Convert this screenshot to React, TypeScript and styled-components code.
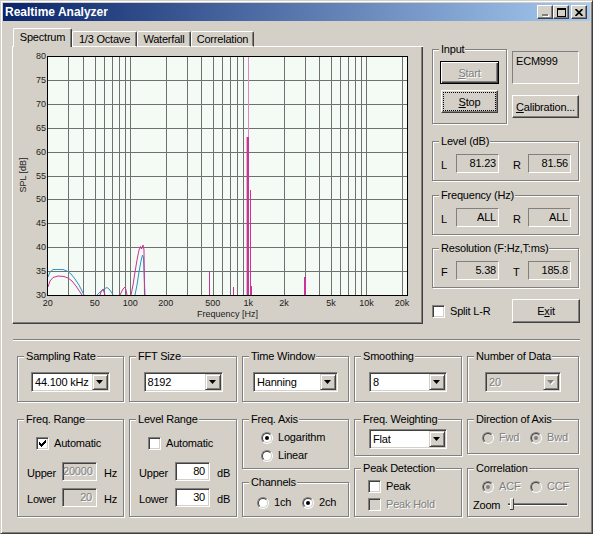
import React from "react";
import styled, { createGlobalStyle } from "styled-components";

const FACE = "#d4d0c8";
const SHADOW = "#808080";
const DARK = "#404040";

const GlobalStyle = createGlobalStyle`
  html, body {
    margin: 0;
    padding: 0;
    background: ${FACE};
  }
  body {
    font-family: "Liberation Sans", Arial, sans-serif;
    font-size: 11px;
    letter-spacing: -0.2px;
    color: #000;
  }
  * {
    box-sizing: border-box;
  }
`;

const Window = styled.div`
  width: 593px;
  height: 534px;
  display: flex;
  flex-direction: column;
  padding: 2px;
  border: 1px solid;
  border-color: ${FACE} ${DARK} ${DARK} ${FACE};
  box-shadow: inset 1px 1px #fff, inset -1px -1px ${SHADOW};
  background: ${FACE};
`;

const TitleBar = styled.div`
  height: 18px;
  flex: none;
  display: flex;
  align-items: center;
  padding: 0 3px 0 2px;
  background: linear-gradient(to right, #0a246a, #a6caf0);
`;

const TitleText = styled.span`
  flex: 1;
  color: #fff;
  font-weight: bold;
  font-size: 12px;
  letter-spacing: 0;
`;

const CaptionButton = styled.span<{ $gap?: number }>`
  width: 16px;
  height: 14px;
  margin-left: ${(p) => p.$gap ?? 0}px;
  display: flex;
  align-items: center;
  justify-content: center;
  background: ${FACE};
  border: 1px solid;
  border-color: #fff ${DARK} ${DARK} #fff;
  box-shadow: inset -1px -1px ${SHADOW};
`;

const Body = styled.div`
  flex: 1;
  display: flex;
  flex-direction: column;
  padding: 7px 0 0 9px;
`;

const TopRow = styled.div`
  display: flex;
  align-items: flex-start;
  gap: 9px;
`;

const TabArea = styled.div`
  width: 411px;
  display: flex;
  flex-direction: column;
`;

const TabStrip = styled.div`
  height: 19px;
  display: flex;
  align-items: flex-end;
`;

const TabLine = styled.div<{ $w?: number; $grow?: boolean }>`
  height: 1px;
  width: ${(p) => (p.$w ? `${p.$w}px` : "auto")};
  flex: ${(p) => (p.$grow ? 1 : "none")};
  background: #fff;
`;

const Tab = styled.div<{ $active?: boolean; $w: number }>`
  width: ${(p) => p.$w}px;
  height: ${(p) => (p.$active ? 19 : 16)}px;
  flex: none;
  display: flex;
  align-items: center;
  justify-content: center;
  padding-bottom: ${(p) => (p.$active ? 2 : 0)}px;
  border-top: 1px solid #fff;
  border-left: 1px solid #fff;
  border-right: 1px solid ${DARK};
  border-bottom: ${(p) => (p.$active ? "none" : "1px solid #fff")};
  border-radius: 2px 2px 0 0;
  box-shadow: inset -1px 0 ${SHADOW};
  white-space: nowrap;
`;

const TabPanel = styled.div`
  height: 277px;
  border-left: 1px solid #fff;
  border-right: 1px solid ${DARK};
  border-bottom: 1px solid ${DARK};
  box-shadow: inset -1px -1px ${SHADOW};
`;

const ChartSvg = styled.svg`
  display: block;
  font-family: "Liberation Sans", Arial, sans-serif;
  font-size: 9px;
  letter-spacing: 0;
`;

const RightColumn = styled.div`
  width: 148px;
  padding-top: 15px;
  display: flex;
  flex-direction: column;
`;

const InputRow = styled.div`
  display: flex;
  gap: 5px;
`;

const SideStack = styled.div`
  display: flex;
  flex-direction: column;
  padding-top: 8px;
  gap: 11px;
`;

const Group = styled.fieldset<{ $w?: number; $h: number; $mt?: number }>`
  margin: ${(p) => p.$mt ?? 0}px 0 0 0;
  padding: 0;
  min-width: 0;
  width: ${(p) => (p.$w ? `${p.$w}px` : "auto")};
  height: ${(p) => p.$h}px;
  border: 1px solid ${SHADOW};
  box-shadow: inset 1px 1px #fff, 1px 1px #fff;
`;

const Legend = styled.legend`
  margin-left: 6px;
  padding: 0 1px 0 2px;
  line-height: 13px;
  background: ${FACE};
  white-space: nowrap;
`;

const GroupBody = styled.div<{ $pt: number; $pl?: number; $gap?: number; $center?: boolean }>`
  display: flex;
  flex-direction: column;
  align-items: ${(p) => (p.$center ? "center" : "flex-start")};
  padding: ${(p) => p.$pt}px 0 0 ${(p) => p.$pl ?? 0}px;
  gap: ${(p) => p.$gap ?? 0}px;
`;

const ButtonBox = styled.div<{ $w: number; $h: number; $default?: boolean; $disabled?: boolean; $ml?: number }>`
  width: ${(p) => p.$w}px;
  height: ${(p) => p.$h}px;
  margin-left: ${(p) => p.$ml ?? 0}px;
  flex: none;
  display: flex;
  padding: 1px;
  background: ${FACE};
  border: 1px solid;
  border-color: ${(p) => (p.$default ? "#000" : `#fff ${DARK} ${DARK} #fff`)};
  box-shadow: ${(p) =>
    p.$default
      ? `inset 1px 1px #fff, inset -1px -1px ${DARK}, inset -2px -2px ${SHADOW}`
      : `inset -1px -1px ${SHADOW}`};
  color: ${(p) => (p.$disabled ? SHADOW : "#000")};
  text-shadow: ${(p) => (p.$disabled ? "1px 1px 0 #fff" : "none")};
`;

const ButtonFace = styled.span<{ $focus?: boolean }>`
  flex: 1;
  display: flex;
  align-items: center;
  justify-content: center;
  border: 1px dotted ${(p) => (p.$focus ? "#000" : "transparent")};
  white-space: nowrap;
`;

type PushButtonProps = {
  w: number;
  h: number;
  isDefault?: boolean;
  disabled?: boolean;
  focus?: boolean;
  ml?: number;
  children: React.ReactNode;
};

const PushButton = ({ w, h, isDefault, disabled, focus, ml, children }: PushButtonProps) => (
  <ButtonBox $w={w} $h={h} $default={isDefault} $disabled={disabled} $ml={ml}>
    <ButtonFace $focus={focus}>{children}</ButtonFace>
  </ButtonBox>
);

const StaticBox = styled.div`
  width: 67px;
  height: 33px;
  padding: 3px 0 0 3px;
  line-height: 13px;
  border: 1px solid;
  border-color: ${SHADOW} #fff #fff ${SHADOW};
`;

const ValueRow = styled.div`
  display: flex;
  align-items: center;
  height: 19px;
`;

const ChanLabel = styled.span<{ $ml?: number }>`
  width: 15px;
  margin-left: ${(p) => p.$ml ?? 0}px;
  padding-top: 3px;
`;

const ValueBox = styled.div`
  width: 43px;
  height: 19px;
  padding-right: 2px;
  line-height: 17px;
  text-align: right;
  border: 1px solid;
  border-color: ${SHADOW} #fff #fff ${SHADOW};
`;

const BottomActions = styled.div`
  margin-top: 11px;
  display: flex;
  align-items: center;
  justify-content: space-between;
`;

const Separator = styled.div`
  margin: 15px 0 0 1px;
  width: 567px;
  height: 2px;
  border-top: 1px solid ${SHADOW};
  border-bottom: 1px solid #fff;
`;

const BottomGrid = styled.div`
  margin: 9px 0 0 5px;
  display: grid;
  grid-template-columns: 107px 108px 107px 108px 112px;
  grid-template-rows: 52px auto;
  column-gap: 5px;
  row-gap: 11px;
`;

const Stack = styled.div`
  display: flex;
  flex-direction: column;
`;

const ComboBox = styled.div<{ $w: number; $disabled?: boolean }>`
  width: ${(p) => p.$w}px;
  height: 20px;
  display: flex;
  padding: 1px;
  border: 1px solid;
  border-color: ${SHADOW} #fff #fff ${SHADOW};
  box-shadow: inset 1px 1px ${DARK}, inset -1px -1px ${FACE};
  background: ${(p) => (p.$disabled ? FACE : "#fff")};
`;

const ComboText = styled.span<{ $disabled?: boolean }>`
  flex: 1;
  padding: 1px 0 0 2px;
  line-height: 15px;
  color: ${(p) => (p.$disabled ? SHADOW : "#000")};
  text-shadow: ${(p) => (p.$disabled ? "1px 1px 0 #fff" : "none")};
`;

const DropButton = styled.span`
  width: 16px;
  height: 16px;
  flex: none;
  display: flex;
  align-items: center;
  justify-content: center;
  padding-top: 1px;
  background: ${FACE};
  border: 1px solid;
  border-color: ${FACE} ${DARK} ${DARK} ${FACE};
  box-shadow: inset 1px 1px #fff, inset -1px -1px ${SHADOW};
`;

const TextField = styled.div<{ $disabled?: boolean }>`
  width: 35px;
  height: 19px;
  padding-right: 4px;
  line-height: 17px;
  text-align: right;
  border: 1px solid;
  border-color: ${SHADOW} #fff #fff ${SHADOW};
  box-shadow: inset 1px 1px ${DARK}, inset -1px -1px ${FACE};
  background: ${(p) => (p.$disabled ? FACE : "#fff")};
  color: ${(p) => (p.$disabled ? SHADOW : "#000")};
  text-shadow: ${(p) => (p.$disabled ? "1px 1px 0 #fff" : "none")};
`;

const FieldRow = styled.div<{ $mt?: number }>`
  display: flex;
  align-items: center;
  height: 19px;
  margin: ${(p) => p.$mt ?? 0}px 0 0 9px;
`;

const FieldLabel = styled.span<{ $w: number }>`
  width: ${(p) => p.$w}px;
  padding-top: 2px;
`;

const Unit = styled.span`
  margin-left: 7px;
  padding-top: 2px;
`;

const OptionRow = styled.div<{ $ml?: number; $mt?: number }>`
  display: flex;
  align-items: center;
  height: 13px;
  margin: ${(p) => p.$mt ?? 0}px 0 0 ${(p) => p.$ml ?? 0}px;
`;

const OptionItem = styled.label<{ $w?: number; $disabled?: boolean }>`
  display: flex;
  align-items: center;
  gap: 5px;
  width: ${(p) => (p.$w ? `${p.$w}px` : "auto")};
  line-height: 13px;
  white-space: nowrap;
  color: ${(p) => (p.$disabled ? SHADOW : "#000")};
  text-shadow: ${(p) => (p.$disabled ? "1px 1px 0 #fff" : "none")};
`;

const CheckBox = styled.span<{ $disabled?: boolean }>`
  width: 13px;
  height: 13px;
  flex: none;
  display: flex;
  align-items: center;
  justify-content: center;
  border: 1px solid;
  border-color: ${SHADOW} #fff #fff ${SHADOW};
  box-shadow: inset 1px 1px ${DARK}, inset -1px -1px ${FACE};
  background: ${(p) => (p.$disabled ? FACE : "#fff")};
`;

const RadioOuter = styled.span`
  width: 12px;
  height: 12px;
  flex: none;
  border-radius: 50%;
  border: 1px solid;
  border-color: ${SHADOW} #fff #fff ${SHADOW};
  display: flex;
`;

const RadioInner = styled.span<{ $disabled?: boolean }>`
  flex: 1;
  border-radius: 50%;
  border: 1px solid;
  border-color: ${DARK} ${FACE} ${FACE} ${DARK};
  background: ${(p) => (p.$disabled ? FACE : "#fff")};
  display: flex;
  align-items: center;
  justify-content: center;
`;

const RadioDot = styled.span<{ $disabled?: boolean }>`
  width: 4px;
  height: 4px;
  border-radius: 50%;
  background: ${(p) => (p.$disabled ? SHADOW : "#000")};
`;

const ZoomLabel = styled.span`
  width: 35px;
`;

/* ---------- small drawn pieces ---------- */

const Arrow = ({ disabled }: { disabled?: boolean }) => (
  <svg width={8} height={5} viewBox="0 0 8 5">
    {disabled && <polygon points="1,1 8,1 4.5,5" fill="#fff" />}
    <polygon points="0,0 7,0 3.5,4" fill={disabled ? SHADOW : "#000"} />
  </svg>
);

const CheckMark = () => (
  <svg width={7} height={7} viewBox="0 0 7 7" shapeRendering="crispEdges">
    <polygon points="0,2 2,4 7,-1 7,2 2,7 0,5" fill="#000" />
  </svg>
);

const Check = ({ checked, disabled }: { checked?: boolean; disabled?: boolean }) => (
  <CheckBox $disabled={disabled}>{checked && <CheckMark />}</CheckBox>
);

const Radio = ({ checked, disabled }: { checked?: boolean; disabled?: boolean }) => (
  <RadioOuter>
    <RadioInner $disabled={disabled}>{checked && <RadioDot $disabled={disabled} />}</RadioInner>
  </RadioOuter>
);

const Combo = ({ w, value, disabled }: { w: number; value: string; disabled?: boolean }) => (
  <ComboBox $w={w} $disabled={disabled}>
    <ComboText $disabled={disabled}>{value}</ComboText>
    <DropButton>
      <Arrow disabled={disabled} />
    </DropButton>
  </ComboBox>
);

const Trackbar = () => (
  <svg width={60} height={14} viewBox="0 0 60 14">
    <line x1={0} x2={59} y1={5.5} y2={5.5} stroke={SHADOW} />
    <line x1={0} x2={59} y1={6.5} y2={6.5} stroke={DARK} />
    <line x1={0} x2={60} y1={7.5} y2={7.5} stroke="#fff" />
    <rect x={2} y={0} width={4} height={12} fill={FACE} />
    <path d="M2.5 11.5 V0.5 H5.5" stroke="#fff" fill="none" />
    <path d="M5.5 0.5 V11.5 H2" stroke={DARK} fill="none" />
  </svg>
);

const MinGlyph = () => (
  <svg width={8} height={8} viewBox="0 0 8 8" style={{ marginTop: 2 }}>
    <rect x={2} y={6} width={6} height={2} fill="#fff" />
    <rect x={1} y={5} width={6} height={2} fill={SHADOW} />
  </svg>
);

const MaxGlyph = () => (
  <svg width={9} height={9} viewBox="0 0 9 9">
    <rect x={0.5} y={0.5} width={8} height={8} fill="none" stroke="#000" />
    <line x1={0} x2={9} y1={1.5} y2={1.5} stroke="#000" />
  </svg>
);

const CloseGlyph = () => (
  <svg width={8} height={7} viewBox="0 0 8 7">
    <path d="M0.5 0 L7.5 7 M7.5 0 L0.5 7" stroke="#000" strokeWidth={1.7} />
  </svg>
);

/* ---------- spectrum chart ---------- */

const GRID_FREQS = [
  30, 40, 50, 60, 70, 80, 90, 100, 200, 300, 400, 500, 600, 700, 800, 900, 1000, 2000, 3000,
  4000, 5000, 6000, 7000, 8000, 9000, 10000, 20000,
];

const X_LABELS: [number, string][] = [
  [20, "20"],
  [50, "50"],
  [100, "100"],
  [200, "200"],
  [500, "500"],
  [1000, "1k"],
  [2000, "2k"],
  [5000, "5k"],
  [10000, "10k"],
  [20000, "20k"],
];

const fx = (f: number) => 47.7 + 118.1 * Math.log10(f / 20);
const px = (v: number) => Math.round(v) + 0.5;
const pts = (list: number[][]) => list.map(([x, y]) => `${x},${y}`).join(" ");

const MAGENTA = "#cc3399";
const CYAN = "#2b94c9";

const magentaTraces = [
  [[48, 287], [50, 281], [53, 277.5], [58, 276], [64, 276.5], [68, 278], [72, 281], [76, 286], [80, 292], [82, 295]],
  [[100, 295], [101, 292], [103, 289], [104, 292], [105, 295]],
  [[120, 295], [123, 289], [125, 287], [126, 290], [127, 295]],
  [[131, 295], [133, 285], [135, 272], [137, 260], [139, 250], [140.5, 246.5], [141.5, 249], [143, 245], [144, 250], [144.5, 295]],
];

const cyanTraces = [
  [[48, 277], [50, 272], [53, 269.5], [63, 269.5], [67, 271], [71, 274], [75, 279], [79, 285], [82, 291], [84, 295]],
  [[97, 295], [100, 292], [104, 289], [107, 287.5], [109, 289], [112, 293], [113, 295]],
  [[135, 295], [137, 285], [139, 272], [141, 261], [142.5, 255], [143.5, 258], [145, 295]],
];

const SpectrumChart = () => {
  const rows = Array.from({ length: 11 }, (_, i) => ({ db: 80 - i * 5, y: 56 + i * 23.9 }));
  return (
    <ChartSvg width={408} height={275} viewBox="13 47 408 275">
      <rect x={47.5} y={56.5} width={360} height={239} fill="#f4faf4" />
      {GRID_FREQS.map((f) => (
        <line key={f} x1={px(fx(f))} x2={px(fx(f))} y1={57} y2={295} stroke="#707070" />
      ))}
      {rows.slice(1, 10).map((r) => (
        <line key={r.db} x1={48} x2={407} y1={px(r.y)} y2={px(r.y)} stroke="#707070" />
      ))}
      {cyanTraces.map((t, i) => (
        <polyline key={`c${i}`} points={pts(t)} fill="none" stroke={CYAN} />
      ))}
      {magentaTraces.map((t, i) => (
        <polyline key={`m${i}`} points={pts(t)} fill="none" stroke={MAGENTA} />
      ))}
      <line x1={248.5} x2={248.5} y1={57} y2={137} stroke="#e584c4" />
      <line x1={247.8} x2={247.8} y1={137} y2={295} stroke={MAGENTA} strokeWidth={2.4} />
      <line x1={250.5} x2={250.5} y1={190} y2={295} stroke={MAGENTA} />
      <line x1={251.5} x2={251.5} y1={286} y2={295} stroke={MAGENTA} />
      <line x1={209.5} x2={209.5} y1={272} y2={295} stroke={MAGENTA} />
      <line x1={233.5} x2={233.5} y1={287} y2={295} stroke={MAGENTA} />
      <line x1={305} x2={305} y1={277} y2={295} stroke={MAGENTA} strokeWidth={2} />
      <rect x={47.5} y={56.5} width={360} height={239} fill="none" stroke="#000" />
      {rows.map((r) => (
        <text key={r.db} x={46} y={r.y + 3} textAnchor="end" fill="#202020">
          {r.db}
        </text>
      ))}
      {X_LABELS.map(([f, l]) => (
        <text key={l} x={fx(f)} y={306} textAnchor="middle" fill="#202020">
          {l}
        </text>
      ))}
      <text x={227.5} y={316.5} textAnchor="middle" fill="#202020">
        Frequency [Hz]
      </text>
      <text x={26} y={175} textAnchor="middle" fill="#202020" transform="rotate(-90 26 175)">
        SPL [dB]
      </text>
    </ChartSvg>
  );
};

/* ---------- right side value groups ---------- */

type ValueGroupProps = {
  title: string;
  mt: number;
  left: [string, string];
  right: [string, string];
};

const ValueGroup = ({ title, mt, left, right }: ValueGroupProps) => (
  <Group $w={147} $h={46} $mt={mt}>
    <Legend>{title}</Legend>
    <GroupBody $pt={6} $pl={8}>
      <ValueRow>
        <ChanLabel>{left[0]}</ChanLabel>
        <ValueBox>{left[1]}</ValueBox>
        <ChanLabel $ml={14}>{right[0]}</ChanLabel>
        <ValueBox>{right[1]}</ValueBox>
      </ValueRow>
    </GroupBody>
  </Group>
);

const RangeGroup = ({
  title,
  auto,
  labelW,
  upper,
  lower,
  unit,
  disabled,
}: {
  title: string;
  auto: boolean;
  labelW: number;
  upper: string;
  lower: string;
  unit: string;
  disabled?: boolean;
}) => (
  <Group $h={104}>
    <Legend>{title}</Legend>
    <GroupBody $pt={11}>
      <OptionRow $ml={18}>
        <OptionItem>
          <Check checked={auto} />
          Automatic
        </OptionItem>
      </OptionRow>
      <FieldRow $mt={12}>
        <FieldLabel $w={labelW}>Upper</FieldLabel>
        <TextField $disabled={disabled}>{upper}</TextField>
        <Unit>{unit}</Unit>
      </FieldRow>
      <FieldRow $mt={7}>
        <FieldLabel $w={labelW}>Lower</FieldLabel>
        <TextField $disabled={disabled}>{lower}</TextField>
        <Unit>{unit}</Unit>
      </FieldRow>
    </GroupBody>
  </Group>
);

const SelectGroup = ({ title, w, value, disabled }: { title: string; w: number; value: string; disabled?: boolean }) => (
  <Group $h={52}>
    <Legend>{title}</Legend>
    <GroupBody $pt={9} $center>
      <Combo w={w} value={value} disabled={disabled} />
    </GroupBody>
  </Group>
);

export default function App() {
  return (
    <>
      <GlobalStyle />
      <Window>
        <TitleBar>
          <TitleText>Realtime Analyzer</TitleText>
          <CaptionButton>
            <MinGlyph />
          </CaptionButton>
          <CaptionButton>
            <MaxGlyph />
          </CaptionButton>
          <CaptionButton $gap={2}>
            <CloseGlyph />
          </CaptionButton>
        </TitleBar>
        <Body>
          <TopRow>
            <TabArea>
              <TabStrip>
                <TabLine $w={1} />
                <Tab $active $w={59}>
                  Spectrum
                </Tab>
                <Tab $w={65}>1/3 Octave</Tab>
                <Tab $w={54}>Waterfall</Tab>
                <Tab $w={63}>Correlation</Tab>
                <TabLine $grow />
              </TabStrip>
              <TabPanel>
                <SpectrumChart />
              </TabPanel>
            </TabArea>

            <RightColumn>
              <InputRow>
                <Group $w={75} $h={81}>
                  <Legend>Input</Legend>
                  <GroupBody $pt={5} $pl={7} $gap={6}>
                    <PushButton w={59} h={23} isDefault disabled>
                      <u>S</u>tart
                    </PushButton>
                    <PushButton w={57} h={23} focus ml={1}>
                      <u>S</u>top
                    </PushButton>
                  </GroupBody>
                </Group>
                <SideStack>
                  <StaticBox>ECM999</StaticBox>
                  <PushButton w={67} h={23}>
                    <u>C</u>alibration...
                  </PushButton>
                </SideStack>
              </InputRow>
              <ValueGroup title="Level (dB)" mt={11} left={["L", "81.23"]} right={["R", "81.56"]} />
              <ValueGroup title="Frequency (Hz)" mt={8} left={["L", "ALL"]} right={["R", "ALL"]} />
              <ValueGroup title="Resolution (F:Hz,T:ms)" mt={7} left={["F", "5.38"]} right={["T", "185.8"]} />
              <BottomActions>
                <OptionItem>
                  <Check />
                  Split L-R
                </OptionItem>
                <PushButton w={68} h={24}>
                  E<u>x</u>it
                </PushButton>
              </BottomActions>
            </RightColumn>
          </TopRow>

          <Separator />

          <BottomGrid>
            <SelectGroup title="Sampling Rate" w={79} value="44.100 kHz" />
            <SelectGroup title="FFT Size" w={79} value="8192" />
            <SelectGroup title="Time Window" w={85} value="Hanning" />
            <SelectGroup title="Smoothing" w={78} value="8" />
            <SelectGroup title="Number of Data" w={76} value="20" disabled />

            <RangeGroup title="Freq. Range" auto labelW={35} upper="20000" lower="20" unit="Hz" disabled />
            <RangeGroup title="Level Range" auto={false} labelW={36} upper="80" lower="30" unit="dB" />

            <Stack>
              <Group $h={56}>
                <Legend>Freq. Axis</Legend>
                <GroupBody $pt={5} $gap={5}>
                  <OptionRow $ml={18}>
                    <OptionItem>
                      <Radio checked />
                      Logarithm
                    </OptionItem>
                  </OptionRow>
                  <OptionRow $ml={18}>
                    <OptionItem>
                      <Radio />
                      Linear
                    </OptionItem>
                  </OptionRow>
                </GroupBody>
              </Group>
              <Group $h={41} $mt={7}>
                <Legend>Channels</Legend>
                <GroupBody $pt={7}>
                  <OptionRow $ml={14}>
                    <OptionItem $w={45}>
                      <Radio />
                      1ch
                    </OptionItem>
                    <OptionItem>
                      <Radio checked />
                      2ch
                    </OptionItem>
                  </OptionRow>
                </GroupBody>
              </Group>
            </Stack>

            <Stack>
              <Group $h={43}>
                <Legend>Freq. Weighting</Legend>
                <GroupBody $pt={3} $center>
                  <Combo w={78} value="Flat" />
                </GroupBody>
              </Group>
              <Group $h={55} $mt={6}>
                <Legend>Peak Detection</Legend>
                <GroupBody $pt={5} $gap={5}>
                  <OptionRow $ml={13}>
                    <OptionItem>
                      <Check />
                      Peak
                    </OptionItem>
                  </OptionRow>
                  <OptionRow $ml={13}>
                    <OptionItem $disabled>
                      <Check disabled />
                      Peak Hold
                    </OptionItem>
                  </OptionRow>
                </GroupBody>
              </Group>
            </Stack>

            <Stack>
              <Group $h={41}>
                <Legend>Direction of Axis</Legend>
                <GroupBody $pt={5}>
                  <OptionRow $ml={14}>
                    <OptionItem $w={48} $disabled>
                      <Radio disabled />
                      Fwd
                    </OptionItem>
                    <OptionItem $disabled>
                      <Radio checked disabled />
                      Bwd
                    </OptionItem>
                  </OptionRow>
                </GroupBody>
              </Group>
              <Group $h={55} $mt={8}>
                <Legend>Correlation</Legend>
                <GroupBody $pt={5} $gap={5}>
                  <OptionRow $ml={14}>
                    <OptionItem $w={48} $disabled>
                      <Radio checked disabled />
                      ACF
                    </OptionItem>
                    <OptionItem $disabled>
                      <Radio disabled />
                      CCF
                    </OptionItem>
                  </OptionRow>
                  <OptionRow $ml={5}>
                    <ZoomLabel>Zoom</ZoomLabel>
                    <Trackbar />
                  </OptionRow>
                </GroupBody>
              </Group>
            </Stack>
          </BottomGrid>
        </Body>
      </Window>
    </>
  );
}
